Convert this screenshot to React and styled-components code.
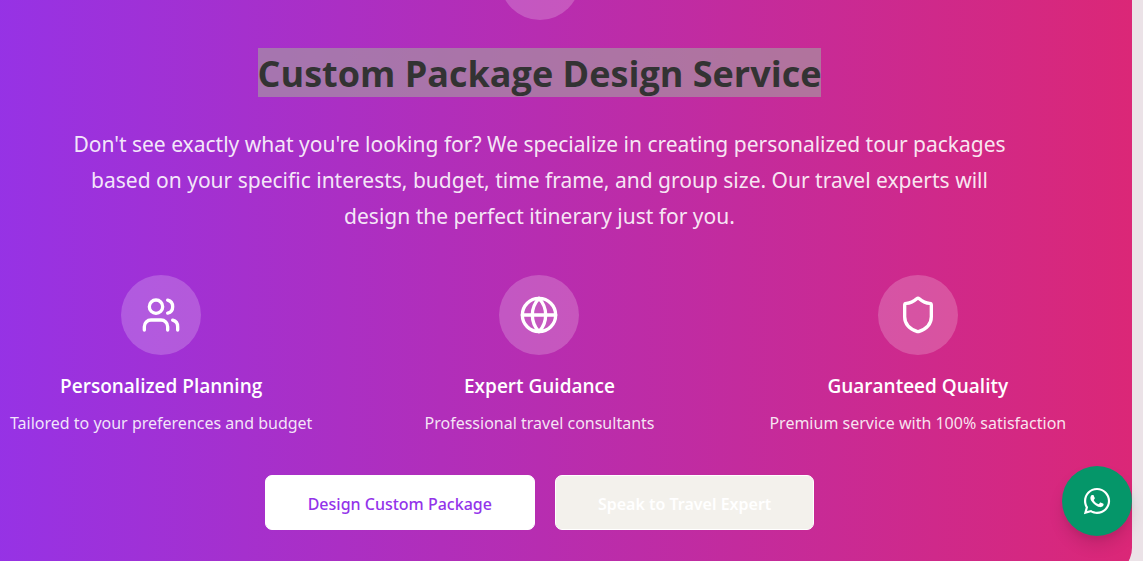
import React from "react";
import styled, { createGlobalStyle } from "styled-components";
import { Users, Globe, Shield } from "lucide-react";
import { FaWhatsapp } from "react-icons/fa";

const GlobalStyle = createGlobalStyle`
  *, *::before, *::after { box-sizing: border-box; }
  body {
    margin: 0;
    background: #ebe2e7;
    font-family: "Segoe UI", "Noto Sans", "Open Sans", sans-serif;
    color: #ffffff;
  }
  h2, h3 { font-family: "Segoe UI", "Open Sans", "Noto Sans", sans-serif; }
  h2, h3, p { margin: 0; }
`;

const Page = styled.main`
  height: 100vh;
  overflow: hidden;
  padding-right: 11px;
`;

const Card = styled.section`
  display: flex;
  flex-direction: column;
  align-items: center;
  margin: -60px 0 0 -53px;
  padding: 0 43px 45px;
  border-radius: 0 0 27px 27px;
  background: linear-gradient(to right, #9333ea, #db2777);
  text-align: center;
`;

const IconCircle = styled.div`
  display: flex;
  align-items: center;
  justify-content: center;
  width: 80px;
  height: 80px;
  border-radius: 50%;
  background: rgba(255, 255, 255, 0.2);
`;

const Heading = styled.h2`
  margin-top: 28px;
  font-size: 36px;
  font-weight: 700;
`;

const Highlight = styled.mark`
  display: block;
  padding-top: 3px;
  line-height: 46px;
  background: rgba(165, 154, 161, 0.66);
  color: #333333;
`;

const Lead = styled.p`
  max-width: 960px;
  margin-top: 29px;
  font-size: 21px;
  line-height: 36px;
  color: rgba(255, 255, 255, 0.9);
`;

const Features = styled.div`
  display: grid;
  grid-template-columns: repeat(3, 1fr);
  gap: 36px;
  width: 100%;
  margin-top: 41px;
`;

const Feature = styled.article`
  display: flex;
  flex-direction: column;
  align-items: center;
`;

const FeatureTitle = styled.h3`
  margin-top: 16px;
  font-size: 19px;
  line-height: 30px;
  font-weight: 600;
`;

const FeatureText = styled.p`
  margin-top: 8px;
  font-size: 16px;
  line-height: 28px;
  color: rgba(255, 255, 255, 0.88);
`;

const Actions = styled.div`
  display: flex;
  gap: 20px;
  margin-top: 38px;
`;

const Button = styled.button`
  height: 55px;
  padding: 2px 42px 0;
  border: 1px solid #ffffff;
  border-radius: 7px;
  background: ${(p) => (p.$muted ? "#f3f1ec" : "#ffffff")};
  color: ${(p) => (p.$muted ? "#ffffff" : "#9333ea")};
  font-family: inherit;
  font-size: 16px;
  font-weight: ${(p) => (p.$muted ? 600 : 500)};
  white-space: nowrap;
  cursor: pointer;
`;

const ChatButton = styled.a`
  position: fixed;
  right: 11px;
  bottom: 25px;
  display: flex;
  align-items: center;
  justify-content: center;
  width: 70px;
  height: 70px;
  border-radius: 50%;
  background: #059669;
  color: #ffffff;
  box-shadow: 0 10px 15px rgba(0, 0, 0, 0.1), 0 4px 6px rgba(0, 0, 0, 0.06);
`;

const features = [
  { icon: Users, title: "Personalized Planning", text: "Tailored to your preferences and budget" },
  { icon: Globe, title: "Expert Guidance", text: "Professional travel consultants" },
  { icon: Shield, title: "Guaranteed Quality", text: "Premium service with 100% satisfaction" },
];

export default function App() {
  return (
    <>
      <GlobalStyle />
      <Page>
        <Card>
          <IconCircle />
          <Heading>
            <Highlight>Custom Package Design Service</Highlight>
          </Heading>
          <Lead>
            Don't see exactly what you're looking for? We specialize in creating
            personalized tour packages based on your specific interests, budget,
            time frame, and group size. Our travel experts will design the
            perfect itinerary just for you.
          </Lead>
          <Features>
            {features.map(({ icon: Icon, title, text }) => (
              <Feature key={title}>
                <IconCircle>
                  <Icon size={40} strokeWidth={2} aria-hidden="true" />
                </IconCircle>
                <FeatureTitle>{title}</FeatureTitle>
                <FeatureText>{text}</FeatureText>
              </Feature>
            ))}
          </Features>
          <Actions>
            <Button type="button">Design Custom Package</Button>
            <Button type="button" $muted>Speak to Travel Expert</Button>
          </Actions>
        </Card>
      </Page>
      <ChatButton href="#chat" aria-label="Chat on WhatsApp">
        <FaWhatsapp size={30} aria-hidden="true" />
      </ChatButton>
    </>
  );
}
